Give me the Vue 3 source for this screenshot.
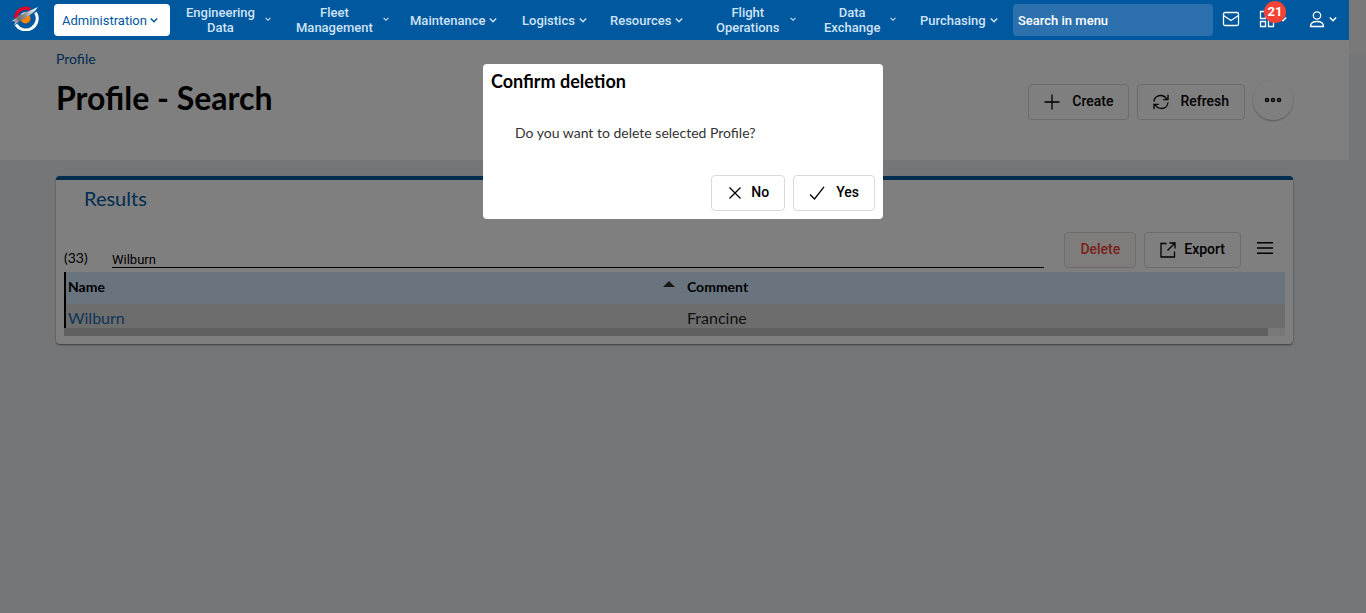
<script setup>
import { ref } from 'vue'

const menu = [
  { lines: ['Administration'], active: true },
  { lines: ['Engineering', 'Data'] },
  { lines: ['Fleet', 'Management'] },
  { lines: ['Maintenance'] },
  { lines: ['Logistics'] },
  { lines: ['Resources'] },
  { lines: ['Flight', 'Operations'] },
  { lines: ['Data', 'Exchange'] },
  { lines: ['Purchasing'] },
]
const rows = [{ name: 'Wilburn', comment: 'Francine' }]
const filter = ref('Wilburn')
const menuSearch = ref('')
</script>

<template>
  <div class="app">
    <header class="topbar">
      <a class="logo" href="#" aria-label="Home">
        <svg width="28" height="26" viewBox="0 0 28 26">
          <defs>
            <linearGradient id="blade" gradientUnits="userSpaceOnUse" x1="1" y1="18" x2="27" y2="4">
              <stop offset="0" stop-color="#f4f4f4" />
              <stop offset=".25" stop-color="#6e6e6e" />
              <stop offset=".5" stop-color="#8c8c8c" />
              <stop offset=".75" stop-color="#d0d0d0" />
              <stop offset="1" stop-color="#fff" />
            </linearGradient>
          </defs>
          <path d="M24.500 7.500A11 11 0 0 1 5 19.500" fill="none" stroke="#fff" stroke-width="3" />
          <path d="M5 13A9.500 9.500 0 0 1 19 4.500" fill="none" stroke="#e4002b" stroke-width="3.600" />
          <path d="M8.500 11.500A6 6 0 0 1 15.500 7.500L9 11.500Z" fill="#fff" />
          <circle cx="14.500" cy="13.500" r="5" fill="#ff8200" />
          <path d="M1 16 8 10.500 18 6 27 2 24 6 17 11.500 10 15.500 3 20 4.500 16.500Z" fill="url(#blade)" />
        </svg>
      </a>
      <nav class="menu" aria-label="Main">
        <button
          v-for="item in menu"
          :key="item.lines.join(' ')"
          type="button"
          class="menu-item"
          :class="{ active: item.active, double: item.lines.length > 1 }"
        >
          <span class="menu-label"><span v-for="l in item.lines" :key="l" class="menu-line">{{ l }}</span></span>
          <svg class="chevron" viewBox="0 0 8 8"><path d="M.8 2.500 4 5.700 7.200 2.500" /></svg>
        </button>
      </nav>
      <input v-model="menuSearch" class="menu-search" type="text" placeholder="Search in menu" aria-label="Search in menu" />
      <div class="tools">
        <button type="button" class="tool" aria-label="Messages">
          <svg width="18" height="16" viewBox="0 0 18 16"><rect x="1.500" y="1.500" width="15" height="13" rx="1.500" /><path d="M1.500 4.500 9 9.500 16.500 4.500" /></svg>
        </button>
        <button type="button" class="tool apps" aria-label="Applications">
          <svg width="16" height="18" viewBox="0 0 16 18"><path d="M1.500 1.500h5v7h-5zM1.500 11.500h5v5h-5zM9.500 1.500h5v5h-5zM9.500 9.500h5v7h-5z" /></svg>
          <svg class="chevron" viewBox="0 0 8 8"><path d="M.8 2.500 4 5.700 7.200 2.500" /></svg>
          <span class="badge">21</span>
        </button>
        <button type="button" class="tool user" aria-label="Account">
          <svg width="16" height="18" viewBox="0 0 16 18"><circle cx="8" cy="5.500" r="3.700" /><path d="M1.500 16.500C1.500 13.500 4 11.500 8 11.500S14.500 13.500 14.500 16.500Z" /></svg>
          <svg class="chevron" viewBox="0 0 8 8"><path d="M.8 2.500 4 5.700 7.200 2.500" /></svg>
        </button>
      </div>
    </header>
    <div class="gutter"></div>

    <main class="page">
      <section class="page-head">
        <a class="crumb" href="#">Profile</a>
        <div class="head-row">
          <h1>Profile - Search</h1>
          <div class="actions">
            <button type="button" class="btn create">
              <svg width="16" height="16" viewBox="0 0 16 16"><path d="M8 .5v15M.5 8h15" /></svg><span>Create</span>
            </button>
            <button type="button" class="btn">
              <svg width="16" height="16" viewBox="0 0 16 16"><path d="M1 7.500C1.300 3.700 4.200 1.500 7.600 1.500 10.300 1.500 12.600 3 14 5.500M15 .8V5.700H10.200M15 8.500C14.700 12.300 11.800 14.500 8.400 14.500 5.700 14.500 3.400 13 2 10.500M1 15.200V10.300H5.800" /></svg><span>Refresh</span>
            </button>
            <button type="button" class="more" aria-label="More actions">
              <svg width="18" height="6" viewBox="0 0 18 6"><circle cx="3" cy="3" r="1.500" /><circle cx="9" cy="3" r="1.500" /><circle cx="15" cy="3" r="1.500" /></svg>
            </button>
          </div>
        </div>
      </section>

      <section class="card">
        <h2>Results</h2>
        <div class="toolbar">
          <span class="count">(33)</span>
          <input v-model="filter" class="filter" type="text" aria-label="Filter results" />
          <button type="button" class="btn danger"><span>Delete</span></button>
          <button type="button" class="btn export">
            <svg width="16" height="16" viewBox="0 0 16 16"><path d="M6.500 1.500H1V15H14.500V9.500M9.500 1H15V6.500M15 1 7.500 8.500" /></svg><span>Export</span>
          </button>
          <button type="button" class="burger" aria-label="Table menu">
            <svg width="16" height="12" viewBox="0 0 16 12"><path d="M0 .7H16M0 6H16M0 11.300H16" /></svg>
          </button>
        </div>
        <table>
          <thead>
            <tr>
              <th scope="col"><span class="sort">Name<svg width="12" height="6" viewBox="0 0 12 6"><path d="M0 6 6 0 12 6Z" /></svg></span></th>
              <th scope="col">Comment</th>
            </tr>
          </thead>
          <tbody>
            <tr v-for="r in rows" :key="r.name">
              <td><a href="#">{{ r.name }}</a></td>
              <td>{{ r.comment }}</td>
            </tr>
          </tbody>
        </table>
        <div class="hscroll"><div class="thumb"></div></div>
      </section>
    </main>

    <div class="overlay">
      <div class="dialog" role="dialog" aria-modal="true" aria-labelledby="dialog-title">
        <h3 id="dialog-title">Confirm deletion</h3>
        <p>Do you want to delete selected Profile?</p>
        <div class="dialog-actions">
          <button type="button" class="btn no">
            <svg width="12" height="12" viewBox="0 0 12 12"><path d="M.5.5 11.500 11.500M11.500.5.5 11.500" /></svg><span>No</span>
          </button>
          <button type="button" class="btn yes">
            <svg width="16" height="14" viewBox="0 0 16 14"><path d="M1 8.500 5.500 13 15 .8" /></svg><span>Yes</span>
          </button>
        </div>
      </div>
    </div>
  </div>
</template>

<style>
html,
body {
  margin: 0;
  background: #eaedf0;
}
</style>

<style scoped>
* {
  box-sizing: border-box;
}
.app {
  font-family: Lato, sans-serif;
  font-size: 14px;
  color: #000;
  min-height: 100vh;
  padding-right: 17px;
}
button,
input {
  font: inherit;
  color: inherit;
  margin: 0;
  padding: 0;
  border: 0;
  background: none;
}
a {
  color: #00589f;
  text-decoration: none;
}
svg {
  flex: none;
  fill: none;
  stroke: currentColor;
}

.topbar {
  position: relative;
  z-index: 2;
  height: 40px;
  display: flex;
  align-items: center;
  padding-left: 11px;
  background: #00589f;
  color: #cfe3f5;
  font-family: Roboto, sans-serif;
  font-size: 13px;
}
.logo {
  width: 43px;
  height: 30px;
}
.logo svg {
  stroke: none;
}
.menu {
  display: grid;
  grid-template-columns: 124px 110px 114px 112px 88px 106px 108px 96px 101px;
  justify-items: start;
  align-items: center;
}
.menu-item {
  display: flex;
  align-items: center;
  gap: 4px;
  height: 32px;
  padding: 0 8px;
  border-radius: 4px;
  font-weight: 500;
  line-height: 15px;
}
.menu-item.active {
  width: 116px;
  gap: 3px;
  background: #fff;
  color: #00589f;
  font-weight: 400;
}
.menu-line {
  display: block;
}
.chevron {
  width: 8px;
  height: 8px;
  stroke-width: 1.5;
}
.double {
  gap: 10px;
}
.double .chevron {
  width: 6px;
  height: 6px;
  margin-bottom: 2px;
}
.menu-search {
  width: 200px;
  height: 32px;
  padding: 0 5px;
  border-radius: 4px;
  background: #2c70ae;
  color: #fff;
  font-weight: 500;
}
.menu-search::placeholder {
  color: #fff;
  opacity: 1;
}
.tools {
  flex: 1;
  display: flex;
  padding: 0 12px 2px 9px;
}
.tool {
  position: relative;
  height: 20px;
  display: flex;
  align-items: center;
  gap: 4px;
  color: #fff;
  stroke-width: 1.3;
}
.apps {
  margin-left: 19px;
}
.user {
  margin-left: auto;
}
.badge {
  position: absolute;
  left: 5px;
  top: -8px;
  width: 22px;
  height: 22px;
  border-radius: 50%;
  background: #f44336;
  color: #fff;
  font-weight: 700;
  line-height: 22px;
}

.gutter {
  position: absolute;
  top: 0;
  right: 0;
  width: 17px;
  height: 54px;
  background: #f2f2f2;
}
.page-head {
  height: 120px;
  padding: 10px 56px;
  background: #fff;
}
.crumb {
  display: block;
  line-height: 18px;
}
.head-row {
  display: flex;
  justify-content: space-between;
  align-items: flex-start;
  margin-top: 12px;
}
h1 {
  margin: 0;
  font-size: 32px;
  line-height: 36px;
  font-weight: 700;
}
.actions {
  display: flex;
  align-items: flex-end;
  gap: 8px;
}
.btn {
  height: 36px;
  display: flex;
  align-items: center;
  gap: 11px;
  padding: 0 15px;
  border: 1px solid #d9d9d9;
  border-radius: 4px;
  font-family: Roboto, sans-serif;
  font-size: 14px;
  font-weight: 500;
}
.btn span {
  padding-bottom: 2px;
}
.btn svg {
  stroke-width: 1.3;
}
.create {
  gap: 12px;
}
.more {
  width: 40px;
  height: 40px;
  display: flex;
  align-items: center;
  justify-content: center;
  border-radius: 50%;
  box-shadow: 0 1px 2px rgba(0, 0, 0, 0.3);
}
.more svg {
  stroke-width: 1.5;
}

.card {
  margin: 16px 56px 0;
  padding: 0 8px 8px;
  background: #fff;
  border-top: 4px solid #00589f;
  border-radius: 4px;
  box-shadow: 0 1px 2px rgba(0, 0, 0, 0.5);
}
h2 {
  margin: 0;
  padding: 6px 20px 0;
  font-size: 20px;
  line-height: 24px;
  font-weight: 400;
  color: #00589f;
}
.toolbar {
  display: flex;
  align-items: center;
  gap: 8px;
  margin-top: 22px;
  padding-bottom: 4px;
}
.count {
  width: 40px;
  padding-top: 14px;
}
.filter {
  flex: 1;
  align-self: flex-end;
  height: 18px;
  margin-right: 12px;
  padding-top: 1px;
  border-bottom: 1px solid #000;
  font-family: Roboto, sans-serif;
  font-size: 13px;
}
.danger {
  color: #f44336;
  background: #fffaf7;
}
.export {
  gap: 8px;
}
.burger {
  width: 32px;
  height: 32px;
  margin-right: 4px;
  padding-bottom: 4px;
  display: flex;
  align-items: center;
  justify-content: center;
}
.burger svg {
  stroke-width: 1.4;
}
table {
  width: 100%;
  table-layout: fixed;
  border-collapse: separate;
  border-spacing: 0;
  border-left: 2px solid #000;
  text-align: left;
}
thead {
  background: #d2e8ff;
}
tbody {
  background: #dadada;
}
th {
  height: 32px;
  padding: 0 10px 3px 2px;
  font-weight: 700;
}
th:first-child {
  width: 619px;
}
td {
  height: 24px;
  padding: 4px 2px 0;
  font-size: 16px;
  line-height: 20px;
  color: #222;
}
.sort {
  display: flex;
  justify-content: space-between;
  align-items: center;
}
.sort svg {
  margin-bottom: 6px;
  stroke: none;
  fill: #333;
}
td a {
  color: #1a6cb0;
}
.hscroll {
  height: 8px;
  background: #f1f1f1;
}
.thumb {
  width: 1204px;
  max-width: 99%;
  height: 8px;
  background: #c1c1c1;
}

.overlay {
  position: fixed;
  inset: 0;
  z-index: 1;
  display: flex;
  align-items: flex-start;
  justify-content: center;
  padding-top: 64px;
  background: rgba(0, 0, 0, 0.5);
}
.dialog {
  width: 400px;
  padding: 8px;
  background: #fff;
  border-radius: 4px;
}
h3 {
  margin: 0;
  font-size: 18px;
  line-height: 18px;
  font-weight: 700;
}
.dialog p {
  margin: 0;
  padding: 33px 24px;
  line-height: 19px;
  color: #333;
}
.dialog-actions {
  display: flex;
  justify-content: flex-end;
  gap: 8px;
}
.no {
  gap: 10px;
  padding: 0 15px 0 17px;
}
</style>
